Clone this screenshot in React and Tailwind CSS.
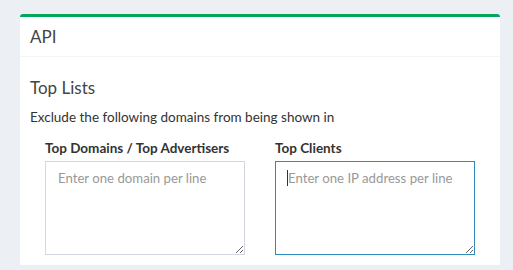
export default function App() {
  return (
    <div className="min-h-[270px] w-full bg-[#ecf0f5] pt-[14px] pl-[20px] pr-[13px]" style={{ fontFamily: "Lato, 'Liberation Sans', sans-serif" }}>
      <div className="bg-white border-t-[3px] border-[#00a65a] rounded-t-[3px]">
        <div className="px-[10px] h-[40px] flex items-center border-b border-[#f4f4f4]">
          <h3 className="text-[17px] leading-[20px] text-[#444]">API</h3>
        </div>
        <div className="px-[10px] pt-[20px] pb-[10px]">
          <h4 className="text-[17px] leading-[22px] text-[#444]">Top Lists</h4>
          <p className="text-[13.5px] leading-[20px] text-[#333] mt-[8px]">Exclude the following domains from being shown in</p>
          <div className="grid grid-cols-2 mt-[11px]">
            <div className="px-[15px]">
              <label className="block text-[13.5px] leading-[20px] font-bold text-[#333] mb-[3px]">Top Domains / Top Advertisers</label>
              <textarea className="block w-full h-[94px] border border-[#d2d6de] px-[12px] py-[6px] text-[13.2px] leading-[20px] text-[#555] placeholder-[#999] outline-none resize-y" style={{ fontFamily: "inherit" }} placeholder="Enter one domain per line" />
            </div>
            <div className="px-[15px]">
              <label className="block text-[13.5px] leading-[20px] font-bold text-[#333] mb-[3px]">Top Clients</label>
              <div className="relative">
                <textarea className="block w-full h-[94px] border border-[#2e8bbd] px-[12px] py-[6px] text-[13.2px] leading-[20px] text-[#555] placeholder-[#999] outline-none" style={{ fontFamily: "inherit" }} placeholder="Enter one IP address per line" />
                <span className="absolute left-[12px] top-[9px] w-px h-[16px] bg-[#333]"></span>
              </div>
            </div>
          </div>
        </div>
      </div>
    </div>
  );
}
